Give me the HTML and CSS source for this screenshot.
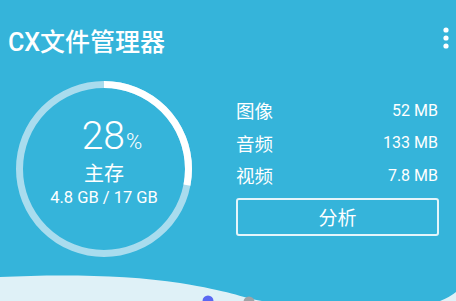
FILE: index.html
```html
<!DOCTYPE html>
<html lang="zh">
<head>
  <meta charset="UTF-8">
  <title>CX文件管理器</title>
  <meta name="viewport" content="width=device-width, initial-scale=1">
  <link rel="stylesheet" href="styles.css">
</head>
<body>
  <div class="app">
    <header class="topbar">
      <h1 class="title">CX文件管理器</h1>
      <svg class="menu" width="8" height="24" viewBox="0 0 8 24">
        <circle cx="4" cy="4" r="2.6" fill="#fff"/>
        <circle cx="4" cy="12" r="2.6" fill="#fff"/>
        <circle cx="4" cy="20" r="2.6" fill="#fff"/>
      </svg>
    </header>

    <main class="storage">
      <div class="ring">
        <svg class="ring-svg" width="176" height="176" viewBox="0 0 176 176">
          <circle cx="88" cy="88" r="84.5" fill="none" stroke="#a9dcee" stroke-width="7"/>
          <circle cx="88" cy="88" r="84.5" fill="none" stroke="#fff" stroke-width="7"
                  stroke-dasharray="148.7 530.9" transform="rotate(-90 88 88)"/>
        </svg>
        <div class="ring-text">
          <div class="pct">28<span class="pct-sign">%</span></div>
          <div class="label">主存</div>
          <div class="used">4.8 GB / 17 GB</div>
        </div>
      </div>

      <div class="details">
        <div class="row"><span class="name">图像</span><span class="size">52 MB</span></div>
        <div class="row"><span class="name">音频</span><span class="size">133 MB</span></div>
        <div class="row"><span class="name">视频</span><span class="size">7.8 MB</span></div>
        <button class="analyze">分析</button>
      </div>
    </main>

    <svg class="wave" width="456" height="31" viewBox="0 0 456 31">
      <path d="M0,7 C60,4 130,5 180,13 S240,27 262,31 L0,31 Z" fill="#dff1f7"/>
      <path d="M440,31 Q450,27 456,22 L456,31 Z" fill="#dff1f7"/>
      <circle cx="208" cy="31" r="5.5" fill="#5a68f2"/>
      <circle cx="249" cy="32" r="5.5" fill="#9fa4a8"/>
    </svg>
  </div>
</body>
</html>
```

FILE: styles.css
```css
body {
  margin: 0;
  padding: 0;
  background: #35b4da;
  font-family: Roboto, "Noto Sans CJK SC", sans-serif;
  color: #fff;
}
.app {
  width: 456px;
  height: 301px;
  overflow: hidden;
}
.topbar {
  height: 81px;
  display: flex;
  align-items: center;
  justify-content: space-between;
  padding: 0 6px 0 8px;
  box-sizing: border-box;
}
.title {
  margin: 0;
  font-size: 25px;
  font-weight: 500;
  margin-top: -2px;
}
.menu {
  margin-top: -5px;
}
.storage {
  display: flex;
  padding-left: 16px;
  height: 176px;
}
.ring {
  display: grid;
  width: 176px;
  height: 176px;
}
.ring-svg,
.ring-text {
  grid-area: 1 / 1;
}
.ring-text {
  display: flex;
  flex-direction: column;
  align-items: center;
  padding-top: 35px;
}
.pct {
  font-size: 39px;
  font-weight: 300;
  line-height: 40px;
  padding-left: 16px;
}
.pct-sign {
  font-size: 22px;
  margin-left: 1px;
}
.label {
  font-size: 20px;
  line-height: 22px;
  margin-top: 1px;
}
.used {
  font-size: 16.5px;
  line-height: 20px;
  margin-top: 3px;
}
.details {
  margin-left: 44px;
  width: 203px;
  padding-top: 13px;
}
.row {
  display: flex;
  align-items: center;
  justify-content: space-between;
  height: 32.5px;
}
.name {
  font-size: 18.5px;
}
.size {
  font-size: 16px;
  padding-right: 1px;
}
.analyze {
  display: block;
  width: 203px;
  height: 38px;
  margin-top: 6px;
  background: transparent;
  border: 2px solid #e4f5fb;
  border-radius: 3px;
  color: #fff;
  font-family: Roboto, "Noto Sans CJK SC", sans-serif;
  font-size: 19px;
  padding: 0;
}
.wave {
  display: block;
  margin-top: 13px;
}
```
